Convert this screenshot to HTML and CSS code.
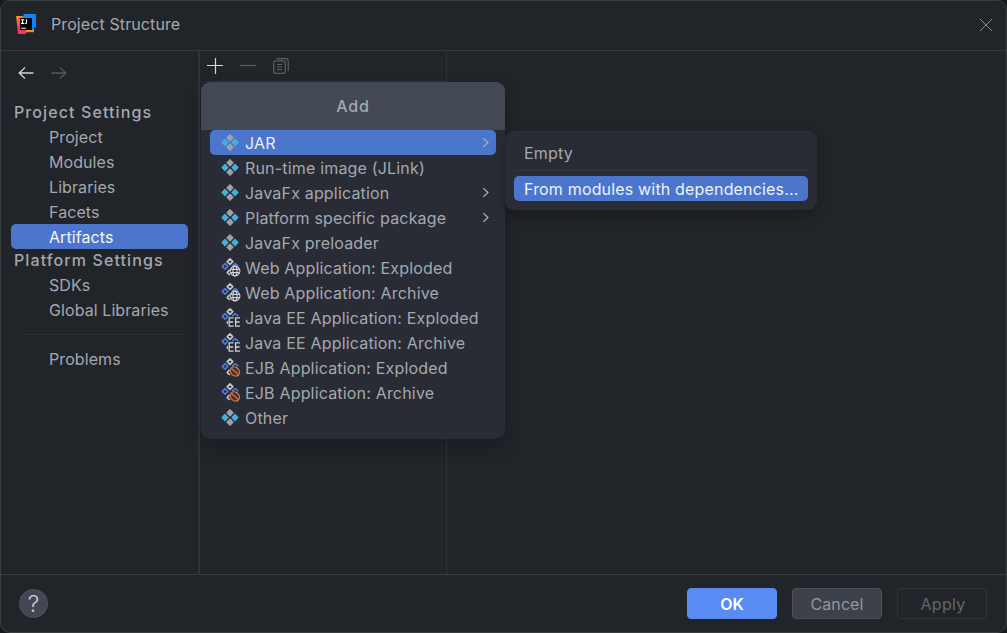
FILE: index.html
```html
<!DOCTYPE html>
<html lang="en">
<head>
<meta charset="utf-8">
<title>Project Structure</title>
<link rel="stylesheet" href="styles.css">
</head>
<body>
<svg class="defs" aria-hidden="true">
  <symbol id="artifact" viewBox="0 0 18 18">
    <g stroke-width="1.5" stroke-linejoin="round">
      <path fill="#9da3aa" stroke="#9da3aa" d="M9 .9 11.8 3.8 9 6.7 6.2 3.8zM9 10.3l2.8 2.9L9 16.1l-2.8-2.9z"/>
      <path fill="#45afd9" stroke="#45afd9" d="M4 5.6l2.8 2.9L4 11.4 1.2 8.5zM14 5.6l2.8 2.9-2.8 2.9-2.8-2.9z"/>
    </g>
  </symbol>
  <symbol id="outline" viewBox="0 0 20 20">
    <g fill="none" stroke-width="1.6" stroke-linejoin="round">
      <path stroke="#c3c6cc" d="M9 .9l2.8 2.7L9 6.3 6.2 3.6zM8.8 17 6.2 14.6l2.4-2.8"/>
      <path stroke="#4c7be0" d="M4.1 5.6 6.9 8.4l-2.8 2.8-2.8-2.8zM11 8.1l3.2-2.4L17.3 8.1"/>
    </g>
  </symbol>
  <symbol id="web" viewBox="0 0 20 20">
    <use href="#outline"/>
    <g fill="none" stroke="#d2d5da" stroke-width="1.1"><circle cx="14" cy="13" r="4.9"/><ellipse cx="14" cy="13" rx="2" ry="4.9"/><path d="M9.6 11.4h8.8M9.6 14.6h8.8"/></g>
  </symbol>
  <symbol id="ee" viewBox="0 0 20 20">
    <use href="#outline"/>
    <path fill="#292c34" d="M7 9h12v10H7z"/>
    <path fill="none" stroke="#ced0d6" stroke-width="1.3" d="M12.6 9.8H8.2v8.4h4.4M8.2 14h4M19 9.8h-4.4v8.4H19M14.6 14h4"/>
  </symbol>
  <symbol id="ejb" viewBox="0 0 20 20">
    <use href="#outline"/>
    <g fill="#4d3029" stroke="#d2764d" stroke-width="1.3"><ellipse cx="13.8" cy="13.4" rx="5" ry="4.2" transform="rotate(45 13.8 13.4)"/><path fill="none" d="M10.6 10.2c1 2.8 5 2.8 6.4 6.4"/></g>
  </symbol>
  <symbol id="chevron" viewBox="0 0 8 12"><path fill="none" stroke="currentColor" stroke-width="1.3" d="M1.3 1.1 5.9 5.5 1.3 9.9"/></symbol>
</svg>

<div class="dialog">
  <header class="titlebar">
    <svg class="logo" viewBox="0 0 20 20">
      <defs>
        <linearGradient id="warm" x1="0" y1="0" x2="0" y2="1"><stop offset="0" stop-color="#f58a28"/><stop offset=".65" stop-color="#f5365f"/></linearGradient>
        <linearGradient id="cool" x1="0" y1="0" x2="1" y2="1"><stop offset="0" stop-color="#1688f0"/><stop offset="1" stop-color="#087cfa"/></linearGradient>
      </defs>
      <path fill="url(#warm)" d="M0 2h7v11l4 4-1.5 3H2z"/>
      <path fill="#f58a28" d="M10 15h8v3.2h-8z"/>
      <path fill="url(#cool)" d="M8 0h12v13l-4 3L6 5z"/>
      <path fill="#050507" d="M4 4h12v12H4z"/>
      <path fill="none" stroke="#fff" stroke-width="1.1" d="M5 5.7h3.2M6.6 5.5v4M5 9.4h3.2M10.5 5.2v3.5q0 .8-.9.8h-.7M5.3 14.2h4.6"/>
    </svg>
    <h1 class="title">Project Structure</h1>
    <svg class="close" viewBox="0 0 14 14"><path d="M1 1l12 12M13 1 1 13"/></svg>
  </header>

  <main class="content">
    <nav class="sidebar">
      <div class="history">
        <svg class="arrow" viewBox="0 0 16 14"><path d="M15.5 7H1.3M7 1.5 1.2 7 7 12.5"/></svg>
        <svg class="arrow arrow-off" viewBox="0 0 16 14"><path d="M.5 7h14.2M9 1.5 14.8 7 9 12.5"/></svg>
      </div>
      <h2 class="group">Project Settings</h2>
      <a class="entry">Project</a>
      <a class="entry">Modules</a>
      <a class="entry">Libraries</a>
      <a class="entry">Facets</a>
      <a class="entry selected">Artifacts</a>
      <h2 class="group group-next">Platform Settings</h2>
      <a class="entry">SDKs</a>
      <a class="entry">Global Libraries</a>
      <div class="divider"></div>
      <a class="entry">Problems</a>
    </nav>
    <section class="artifacts">
      <div class="toolbar">
        <svg class="tool" viewBox="0 0 16 16"><path d="M8.5 0v16M0 7.5h16"/></svg>
        <svg class="tool tool-off" viewBox="0 0 16 16"><path d="M0 7.5h16"/></svg>
        <svg class="tool tool-off" viewBox="0 0 16 16"><rect x=".7" y="2.8" width="11.6" height="12.5" rx="2"/><path d="M3.5.7h9.3q2.4 0 2.4 2.4v10M4 6.5h5M4 9h5M4 11.5h5"/></svg>
      </div>
    </section>
    <section class="details"></section>
  </main>

  <footer class="footer">
    <button class="help">?</button>
    <button class="button primary">OK</button>
    <button class="button">Cancel</button>
    <button class="button disabled">Apply</button>
  </footer>
</div>

<div class="menu">
  <div class="menu-title">Add</div>
  <div class="item item-active"><svg class="icon"><use href="#artifact"/></svg><span>JAR</span><svg class="more"><use href="#chevron"/></svg></div>
  <div class="item"><svg class="icon"><use href="#artifact"/></svg><span>Run-time image (JLink)</span></div>
  <div class="item"><svg class="icon"><use href="#artifact"/></svg><span>JavaFx application</span><svg class="more"><use href="#chevron"/></svg></div>
  <div class="item"><svg class="icon"><use href="#artifact"/></svg><span>Platform specific package</span><svg class="more"><use href="#chevron"/></svg></div>
  <div class="item"><svg class="icon"><use href="#artifact"/></svg><span>JavaFx preloader</span></div>
  <div class="item"><svg class="icon large"><use href="#web"/></svg><span>Web Application: Exploded</span></div>
  <div class="item"><svg class="icon large"><use href="#web"/></svg><span>Web Application: Archive</span></div>
  <div class="item"><svg class="icon large"><use href="#ee"/></svg><span>Java EE Application: Exploded</span></div>
  <div class="item"><svg class="icon large"><use href="#ee"/></svg><span>Java EE Application: Archive</span></div>
  <div class="item"><svg class="icon large"><use href="#ejb"/></svg><span>EJB Application: Exploded</span></div>
  <div class="item"><svg class="icon large"><use href="#ejb"/></svg><span>EJB Application: Archive</span></div>
  <div class="item"><svg class="icon"><use href="#artifact"/></svg><span>Other</span></div>
</div>

<div class="submenu">
  <div class="choice">Empty</div>
  <div class="rule"></div>
  <div class="choice choice-active">From modules with dependencies...</div>
</div>
</body>
</html>
```
FILE: styles.css
```css
* { box-sizing: border-box; }
body {
  margin: 0;
  width: 1007px;
  height: 633px;
  overflow: hidden;
  position: relative;
  background: #17191d;
  color: #a4a8b0;
  font: 16px/25px Inter, "Liberation Sans", sans-serif;
}
h1, h2 { margin: 0; font-size: 16px; font-weight: 400; }
svg { flex: none; }
.defs { position: absolute; width: 0; height: 0; }
.dialog {
  width: 1007px;
  height: 633px;
  display: flex;
  flex-direction: column;
  background: #212429;
  border: 1px solid #3a3d42;
  border-radius: 10px;
}
.titlebar {
  height: 50px;
  display: flex;
  align-items: center;
  padding: 0 13px 3px 15px;
  border-bottom: 1px solid #35383d;
}
.logo { width: 20px; height: 20px; }
.title { margin-left: 15px; flex: 1; letter-spacing: 0.1px; }
.close { width: 14px; height: 14px; margin-top: 2px; fill: none; stroke: #85888c; stroke-width: 1; }
.content { flex: 1; display: flex; min-height: 0; }
.sidebar { width: 199px; border-right: 2px solid #303338; }
.history { height: 49px; padding: 15px 0 0 17px; display: flex; gap: 17px; }
.arrow { width: 16px; height: 14px; fill: none; stroke: #d0d2d6; stroke-width: 1.3; }
.arrow-off { stroke: #55585e; }
.group { height: 24px; line-height: 24px; padding-left: 13px; font-weight: 500; letter-spacing: 1.1px; }
.group-next { line-height: 22px; }
.entry {
  display: block;
  height: 25px;
  line-height: 27px;
  margin: 0 10px;
  padding-left: 38px;
  border-radius: 5px;
  letter-spacing: 0.08px;
}
.group-next ~ .entry { line-height: 25px; }
.selected { background: #4b76cc; color: #f4f7fc; }
.divider { height: 1px; margin: 11px 14px 12px 19px; background: #2b2e33; }
.artifacts { width: 247px; border-right: 1px solid #303338; }
.toolbar { height: 31px; padding: 7px 0 0 7px; display: flex; gap: 17px; border-bottom: 1px solid #2b2e33; }
.tool { width: 16px; height: 16px; fill: none; stroke: #d4d6da; stroke-width: 1.2; }
.tool-off { stroke: #5b5e62; }
.details { flex: 1; }
.footer {
  height: 58px;
  display: flex;
  align-items: center;
  padding: 0 19px 0 18px;
  border-top: 1px solid #393c41;
}
.help {
  width: 29px;
  height: 29px;
  padding: 0;
  border: 1px solid #515560;
  border-radius: 50%;
  margin-right: auto;
  background: #434753;
  color: #ced1d7;
  font: 300 23px/28px Inter, sans-serif;
}
.button {
  width: 90px;
  height: 31px;
  margin-left: 15px;
  padding: 0;
  border: 1px solid #4b4f57;
  border-radius: 4px;
  background: #3d4149;
  color: #92969e;
  font: 16px/28px Inter, sans-serif;
  letter-spacing: 0.1px;
}
.primary { background: #588cf3; border-color: #588cf3; color: #fff; font-weight: 600; }
.disabled { padding-left: 2px; background: transparent; border-color: #303338; color: #64676c; letter-spacing: 0.3px; }
.menu {
  position: absolute;
  left: 201px;
  top: 82px;
  width: 304px;
  height: 357px;
  border-radius: 9px;
  overflow: hidden;
  background: #292c34;
  box-shadow: 0 8px 18px rgba(0, 0, 0, 0.22);
}
.menu-title { height: 48px; background: #434954; text-align: center; line-height: 48px; font-weight: 500; letter-spacing: 0.8px; }
.item {
  height: 25px;
  line-height: 25px;
  margin: 0 9px;
  padding: 0 6px 0 11px;
  display: flex;
  align-items: center;
  border-radius: 5px;
  letter-spacing: 0.18px;
  white-space: nowrap;
}
.item span { padding-top: 2px; }
.item-active { background: #4b76cc; color: #e8eefb; }
.icon { width: 18px; height: 18px; margin-right: 6px; }
.large { width: 20px; height: 20px; margin-right: 4px; }
.more { width: 8px; height: 12px; margin-left: auto; color: #adb1ba; }
.submenu {
  position: absolute;
  left: 505px;
  top: 131px;
  width: 312px;
  height: 79px;
  padding: 10px 9px 0;
  border-radius: 9px;
  background: #292c34;
  box-shadow: 0 6px 14px rgba(0, 0, 0, 0.22);
}
.choice { height: 25px; padding-left: 10px; border-radius: 5px; letter-spacing: 0.17px; white-space: nowrap; }
.rule { height: 1px; margin: 4px 0 5px 2px; background: #34373f; }
.choice-active { background: #4b76cc; color: #edf2fc; line-height: 27px; }
```
